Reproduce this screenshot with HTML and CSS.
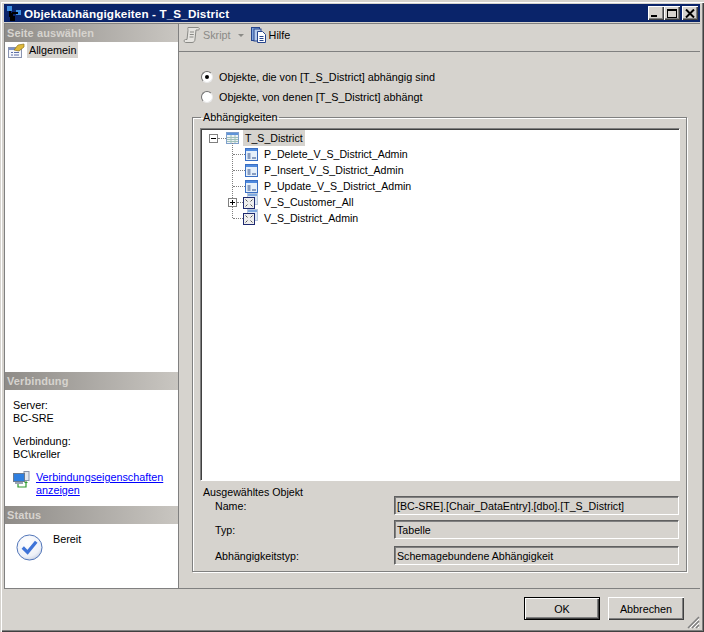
FILE: index.html
```html
<!DOCTYPE html>
<html lang="de">
<head>
<meta charset="utf-8">
<title>Objektabhängigkeiten - T_S_District</title>
<link rel="stylesheet" href="styles.css">
</head>
<body>
<svg class="defs" width="0" height="0" aria-hidden="true">
  <defs>
    <symbol id="i-proc" viewBox="0 0 13 13">
      <rect x="0.5" y="0.5" width="12" height="12" fill="#fff" stroke="#3a6fc4"/>
      <rect x="1" y="1" width="11" height="2" fill="#4f8ade"/>
      <rect x="1" y="3" width="11" height="9" fill="#e6f0fa"/>
      <path d="M2.5 6h3M2.5 8h3M2.5 10h3M7 10h4" stroke="#2a4a86" stroke-width="1"/>
    </symbol>
    <symbol id="i-table" viewBox="0 0 13 13">
      <rect x="0.5" y="0.5" width="12" height="11" fill="#eef3f6" stroke="#7fa0cc"/>
      <rect x="1" y="1" width="11" height="2" fill="#5f93d8"/>
      <path d="M1 5.5h11M1 7.5h11M1 9.5h11M5 3v8M9 3v8" stroke="#9fc0b8" stroke-width="1"/>
    </symbol>
    <symbol id="i-view" viewBox="0 0 15 16">
      <rect x="4.5" y="0.5" width="10" height="11" fill="#dce8f6" stroke="#b7c6dc"/>
      <rect x="5" y="1" width="9" height="2" fill="#7fa9e0"/>
      <rect x="0.5" y="4.5" width="11" height="11" fill="#eeeeee" stroke="#1e2a70"/>
      <path d="M2.5 6.5l2 2M9.5 6.5l-2 2M2.5 13.5l2-2M9.5 13.5l-2-2" stroke="#555" stroke-width="1"/>
    </symbol>
  </defs>
</svg>

<div class="window">
  <header class="titlebar">
    <svg class="app-icon" width="16" height="16" viewBox="0 0 16 16">
      <rect x="1" y="0" width="5" height="5" fill="#3f8fe0"/>
      <rect x="10" y="4" width="5" height="5" fill="#3f8fe0"/>
      <rect x="4" y="10" width="5" height="5" fill="#000"/>
      <path d="M4 5v6M6 7h6M6 7v4" stroke="#000" stroke-width="2" fill="none"/>
    </svg>
    <span class="title">Objektabhängigkeiten - T_S_District</span>
    <div class="winbtns">
      <button class="winbtn" aria-label="Minimieren"><span class="g-min"></span></button>
      <button class="winbtn" aria-label="Maximieren"><span class="g-max"></span></button>
      <button class="winbtn winbtn-close" aria-label="Schließen">
        <svg width="10" height="9" viewBox="0 0 10 9"><path d="M1 0.5l8 8M9 0.5l-8 8" stroke="#000" stroke-width="2"/></svg>
      </button>
    </div>
  </header>

  <div class="main">
    <aside class="side">
      <h2 class="side-head">Seite auswählen</h2>
      <div class="pages">
        <div class="page-row">
          <svg width="17" height="15" viewBox="0 0 17 15">
            <rect x="0.5" y="4.5" width="13" height="10" fill="#f4f6fb" stroke="#8a94b0"/>
            <rect x="1" y="5" width="12" height="2" fill="#7d93c8"/>
            <path d="M3 9.5h2M6 9.5h5M3 12h2M6 12h5" stroke="#5c6fa8"/>
            <path d="M6 7l4-5 6-1 0 3-5 4z" fill="#e0b93a" stroke="#8c7420" stroke-width="0.7"/>
          </svg>
          <span class="page-label">Allgemein</span>
        </div>
      </div>

      <h2 class="side-head">Verbindung</h2>
      <div class="conn">
        <div class="conn-block">
          <div>Server:</div>
          <div>BC-SRE</div>
        </div>
        <div class="conn-block">
          <div>Verbindung:</div>
          <div>BC\kreller</div>
        </div>
        <div class="conn-link">
          <svg width="17" height="17" viewBox="0 0 17 17">
            <rect x="11" y="0.5" width="5" height="9" fill="#e4e8ee" stroke="#8a94a8"/>
            <rect x="0.5" y="2.5" width="11" height="8" fill="#2f7fe0" stroke="#6a7a90"/>
            <rect x="2" y="11" width="8" height="2" fill="#9aa4b4"/>
            <path d="M5 13v3h8v-5" stroke="#2f9a2f" stroke-width="1.2" fill="none"/>
            <path d="M11 12l2-2 2 2z" fill="#2f9a2f"/>
          </svg>
          <a href="#">Verbindungseigenschaften anzeigen</a>
        </div>
      </div>

      <h2 class="side-head">Status</h2>
      <div class="status">
        <svg width="27" height="27" viewBox="0 0 28 28">
          <defs>
            <radialGradient id="orb" cx="0.4" cy="0.3" r="0.8">
              <stop offset="0" stop-color="#ffffff"/>
              <stop offset="0.7" stop-color="#eef1f8"/>
              <stop offset="1" stop-color="#b9c4dc"/>
            </radialGradient>
          </defs>
          <circle cx="14" cy="14" r="13" fill="url(#orb)" stroke="#4a6fb5"/>
          <path d="M7 14l5 5 9-11" fill="none" stroke="#3f74d8" stroke-width="3.4"/>
        </svg>
        <span class="status-text">Bereit</span>
      </div>
    </aside>

    <section class="content">
      <div class="toolbar">
        <span class="tool tool-off">
          <svg width="18" height="18" viewBox="0 0 18 18">
            <path d="M5 1.5h10c1.5 0 2 2.5 0 2.5h-2l-1 9c0 2-1 3.500-3 3.500H2.500c-1.500 0-2-3 0-3H4L5 4.500C5 3 4.500 1.500 5 1.500z" fill="#e6e4e0" stroke="#8a8a86"/>
            <path d="M7 6h4M6.800 8.500h4M6.500 11h4" stroke="#8a8a86"/>
          </svg>
          <span>Skript</span>
          <i class="caret"></i>
        </span>
        <span class="sep"></span>
        <span class="tool">
          <svg width="15" height="16" viewBox="0 0 15 16">
            <rect x="0.5" y="0.5" width="8" height="13" fill="#7ea4dc" stroke="#27458c"/>
            <rect x="3" y="2" width="7" height="12" fill="#b6cdee" stroke="#27458c"/>
            <path d="M6.500 4.500h5l3 3v8h-8z" fill="#fff" stroke="#27458c"/>
            <path d="M8.500 9.500h4M8.500 11.500h4M8.500 13.500h4" stroke="#27458c"/>
          </svg>
          <span>Hilfe</span>
        </span>
      </div>

      <div class="body">
        <div class="radios">
          <label class="radio"><span class="dot dot-on"></span>Objekte, die von [T_S_District] abhängig sind</label>
          <label class="radio"><span class="dot"></span>Objekte, von denen [T_S_District] abhängt</label>
        </div>

        <fieldset class="group">
          <legend>Abhängigkeiten</legend>
          <div class="tree">
            <div class="row root-row">
              <span class="exp exp-minus"></span>
              <span class="hdots"></span>
              <svg class="ico" width="13" height="13"><use href="#i-table"/></svg>
              <span class="node node-sel">T_S_District</span>
            </div>
            <ul class="kids">
              <li class="row kid"><span class="kdots"></span><svg class="ico" width="13" height="13"><use href="#i-proc"/></svg><span class="node">P_Delete_V_S_District_Admin</span></li>
              <li class="row kid"><span class="kdots"></span><svg class="ico" width="13" height="13"><use href="#i-proc"/></svg><span class="node">P_Insert_V_S_District_Admin</span></li>
              <li class="row kid"><span class="kdots"></span><svg class="ico" width="13" height="13"><use href="#i-proc"/></svg><span class="node">P_Update_V_S_District_Admin</span></li>
              <li class="row kid kid-view"><span class="exp exp-plus"></span><span class="hdots hdots-view"></span><svg class="ico" width="15" height="16"><use href="#i-view"/></svg><span class="node">V_S_Customer_All</span></li>
              <li class="row kid kid-view kid-last"><span class="kdots"></span><svg class="ico" width="15" height="16"><use href="#i-view"/></svg><span class="node">V_S_District_Admin</span></li>
            </ul>
          </div>

          <div class="selected">
            <div class="selected-title">Ausgewähltes Objekt</div>
            <div class="field field-1"><span class="f-label">Name:</span><span class="f-value">[BC-SRE].[Chair_DataEntry].[dbo].[T_S_District]</span></div>
            <div class="field field-2"><span class="f-label">Typ:</span><span class="f-value">Tabelle</span></div>
            <div class="field field-3"><span class="f-label">Abhängigkeitstyp:</span><span class="f-value">Schemagebundene Abhängigkeit</span></div>
          </div>
        </fieldset>
      </div>
    </section>
  </div>

  <footer class="footer">
    <button class="btn btn-default">OK</button>
    <button class="btn">Abbrechen</button>
    <svg class="grip" width="13" height="13" viewBox="0 0 13 13">
      <path d="M12 1L1 12M12 5L5 12M12 9L9 12" stroke="#808080" stroke-width="1.5"/>
      <path d="M12 3L3 12M12 7L7 12M12 11L11 12" stroke="#fff" stroke-width="1"/>
    </svg>
  </footer>
</div>
</body>
</html>
```

FILE: styles.css
```css
* { box-sizing: border-box; }
html, body { margin: 0; padding: 0; }
body {
  width: 704px;
  height: 632px;
  overflow: hidden;
  background: #d6d3ce;
  font-family: "Liberation Sans", Arial, sans-serif;
  font-size: 10.8px;
  color: #000;
}
.defs { display: block; width: 0; height: 0; }

.window {
  width: 704px;
  height: 632px;
  display: flex;
  flex-direction: column;
  padding: 4px 4px 3px 4px;
  background: #d6d3ce;
  border-top: 1px solid #d6d3ce;
  box-shadow: inset 1px 1px 0 #d6d3ce, inset 2px 2px 0 #fff, inset -1px -1px 0 #404040, inset -2px -2px 0 #808080;
}

.titlebar {
  height: 18px;
  flex: none;
  margin-top: -1px;
  background: #0a246a;
  display: flex;
  align-items: center;
  padding: 0 2px 0 2px;
}
.app-icon { margin-right: 2px; margin-top: 1px; }
.title { color: #fff; font-weight: bold; font-size: 11.7px; letter-spacing: 0.13px; }
.winbtns { margin-left: auto; display: flex; }
.winbtn {
  width: 16px;
  height: 14px;
  padding: 0;
  margin: 0;
  background: #d6d3ce;
  border: 0;
  box-shadow: inset 1px 1px 0 #fff, inset -1px -1px 0 #404040, inset -2px -2px 0 #808080;
  display: flex;
  align-items: center;
  justify-content: center;
}
.winbtn-close { margin-left: 2px; }
.g-min { display: block; width: 6px; height: 2px; background: #000; margin: 6px 5px 0 0; }
.g-max { display: block; width: 10px; height: 9px; border: 1px solid #000; border-top-width: 2px; }

.main {
  flex: 1;
  min-height: 0;
  display: flex;
  margin-top: 1px;
  border-top: 1px solid #808080;
  border-bottom: 1px solid #808080;
}

.side {
  width: 175px;
  flex: none;
  background: #fff;
  border-left: 1px solid #808080;
  border-right: 1px solid #808080;
  display: flex;
  flex-direction: column;
}
.side-head {
  height: 18px;
  flex: none;
  margin: 0;
  padding: 0 0 0 2px;
  font-size: 11px;
  line-height: 18px;
  font-weight: bold;
  color: #d6d3ce;
  letter-spacing: 0.1px;
  background: linear-gradient(to right, #8f8c88, #c9c6c1);
}
.pages { flex: 1; padding: 0 0 0 3px; }
.page-row { display: flex; align-items: center; height: 16px; }
.page-row svg { flex: none; margin-right: 2px; }
.page-label { background: #d6d3ce; padding: 0 2px; line-height: 16px; }

.conn { flex: none; height: 116px; padding: 9px 0 0 8px; line-height: 13px; }
.conn-block { margin-bottom: 10px; }
.conn-link { display: flex; margin-top: 10px; }
.conn-link svg { flex: none; margin-right: 6px; }
.conn-link a { color: #0000ff; width: 135px; display: block; }

.status {
  flex: none;
  height: 64px;
  display: flex;
  padding: 8px 0 0 11px;
}
.status svg { flex: none; margin-top: 2px; margin-right: 10px; }
.status-text { margin-top: 1px; }

.content { flex: 1; min-width: 0; display: flex; flex-direction: column; }
.toolbar {
  height: 28px;
  flex: none;
  display: flex;
  align-items: center;
  padding: 0 0 5px 4px;
  border-bottom: 1px solid #808080;
}
.tool { display: flex; align-items: center; gap: 3px; }
.tool-off { color: #8a8a86; gap: 2px; }
.caret {
  display: block;
  width: 0;
  height: 0;
  margin-left: 5px;
  border-left: 3px solid transparent;
  border-right: 3px solid transparent;
  border-top: 3px solid #8a8a86;
}
.sep { width: 7px; }

.body { flex: 1; min-height: 0; padding: 15px 13px 16px 13px; display: flex; flex-direction: column; }
.radios { padding-left: 9px; font-size: 10.8px; }
.radio { display: flex; align-items: center; height: 20px; }
.dot {
  width: 12px;
  height: 12px;
  border-radius: 50%;
  background: #fff;
  border: 1px solid;
  border-color: #707070 #e8e8e8 #e8e8e8 #707070;
  margin-right: 6px;
  position: relative;
  flex: none;
}
.dot-on::after {
  content: "";
  position: absolute;
  left: 3px;
  top: 3px;
  width: 4px;
  height: 4px;
  border-radius: 50%;
  background: #000;
}

.group {
  flex: 1;
  min-height: 0;
  margin: 4px 0 0;
  padding: 0 6px 0 7px;
  border: 1px solid #808080;
  box-shadow: 1px 1px 0 #fff, inset 1px 1px 0 #fff;
  display: flex;
  flex-direction: column;
  min-width: 0;
}
.group legend { padding: 0 2px; margin-left: 1px; line-height: 13px; }

.tree {
  height: 353px;
  flex: none;
  margin-top: 4px;
  background: #fff;
  border: 1px solid;
  border-color: #808080 #fff #fff #808080;
  box-shadow: inset 1px 1px 0 #404040;
  padding: 1px 0 0 8px;
  font-size: 10.6px;
}
.row { display: flex; align-items: center; height: 16px; }
.kids { margin: 0; padding: 0 0 0 23px; list-style: none; position: relative; }
.kids::before {
  content: "";
  position: absolute;
  left: 23px;
  top: -3px;
  height: 75px;
  border-left: 1px dotted #808080;
}
.exp {
  width: 9px;
  height: 9px;
  background: #fff;
  border: 1px solid #808080;
  position: relative;
  flex: none;
  z-index: 1;
}
.exp::before {
  content: "";
  position: absolute;
  left: 1px;
  top: 3px;
  width: 5px;
  height: 1px;
  background: #000;
}
.exp-plus::after {
  content: "";
  position: absolute;
  left: 3px;
  top: 1px;
  width: 1px;
  height: 5px;
  background: #000;
}
.hdots { width: 8px; border-top: 1px dotted #808080; flex: none; }
.root-row .ico { margin-right: 4px; flex: none; }
.kdots { width: 12px; margin-left: 1px; border-top: 1px dotted #808080; flex: none; }
.kid .ico { margin-right: 4px; flex: none; }
.kid-view .ico { margin-right: 4px; margin-top: -2px; }
.kid-view .exp { margin-left: -4px; }
.hdots-view { width: 6px; }
.kid-last .kdots { width: 10px; }
.node { padding: 0 2px; line-height: 16px; white-space: nowrap; }
.node-sel { background: #d6d3ce; }

.selected { flex: 1; min-height: 0; font-size: 10.65px; }
.selected-title { margin-top: 5px; padding-left: 3px; line-height: 13px; }
.field { display: flex; align-items: center; padding-left: 15px; height: 19px; }
.field-1 { margin-top: -3px; }
.field-2 { margin-top: 5px; }
.field-3 { margin-top: 7px; }
.f-label { width: 179px; flex: none; }
.f-value {
  width: 285px;
  height: 19px;
  flex: none;
  border: 1px solid;
  border-color: #606060 #fff #fff #606060;
  box-shadow: inset 1px 1px 0 #808080;
  padding: 2px 0 0 2px;
  line-height: 15px;
}

.footer {
  height: 40px;
  flex: none;
  display: flex;
  justify-content: flex-end;
  align-items: flex-start;
  gap: 8px;
  padding: 8px 16px 0 0;
  position: relative;
}
.btn {
  height: 23px;
  width: 76px;
  padding: 0;
  font: inherit;
  background: #d6d3ce;
  color: #000;
  border: 0;
  box-shadow: inset 1px 1px 0 #fff, inset -1px -1px 0 #404040, inset -2px -2px 0 #808080;
}
.btn-default {
  border: 1px solid #000;
}
.grip { position: absolute; right: 0; bottom: 0; }
```
